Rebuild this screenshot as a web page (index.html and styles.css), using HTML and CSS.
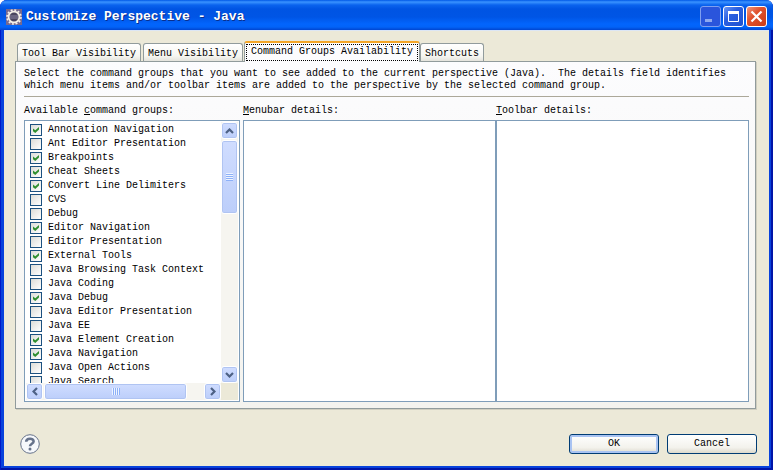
FILE: index.html
```html
<!DOCTYPE html>
<html lang="en">
    <head>
        <meta charset="utf-8">
        <meta name="viewport" content="width=device-width">
        <title>Customize Perspective - Java</title>
        <link rel="stylesheet" href="styles.css">
    </head>
    <body>
        <div class="window">
            <header class="titlebar">
                <svg class="logo" width="16" height="16" viewBox="0 0 16 16">
                    <rect width="16" height="16" fill="#75698f"/>
                    <circle cx="8" cy="8" r="7" fill="none" stroke="#f4efe8" stroke-width="1.6" stroke-dasharray="2 1.670"/>
                    <circle cx="8" cy="8" r="5.4" fill="#4a4560" stroke="#f4efe8" stroke-width="1.8"/>
                    <path d="M4 7h8M4 9h8" stroke="#8b86a3"/>
                </svg>
                <h1>Customize Perspective - Java</h1>
                <button class="caption minimize" aria-label="Minimize">
                    <svg width="19" height="19" viewBox="0 0 19 19"><path d="M4 13.5h7" stroke="#8fa9f0" stroke-width="3"/></svg>
                </button>
                <button class="caption" aria-label="Maximize">
                    <svg width="19" height="19" viewBox="0 0 19 19"><path d="M4.5 5v9.5h10V5" fill="none" stroke="#fff"/><path d="M4 5.5h11" stroke="#fff" stroke-width="3"/></svg>
                </button>
                <button class="caption close" aria-label="Close">
                    <svg width="19" height="19" viewBox="0 0 19 19"><path d="M4.5 4.5l10 10M14.5 4.5l-10 10" stroke="#fff" stroke-width="2.2"/></svg>
                </button>
            </header>

            <main class="client">
                <div class="tabs" role="tablist">
                    <button class="tab" role="tab">Tool Bar Visibility</button>
                    <button class="tab" role="tab">Menu Visibility</button>
                    <button class="tab active" role="tab" aria-selected="true"><span>Command Groups Availability</span></button>
                    <button class="tab" role="tab">Shortcuts</button>
                </div>
                <section class="panel">
                    <p class="description">Select the command groups that you want to see added to the current perspective (Java).&nbsp; The details field identifies which menu items and/or toolbar items are added to the perspective by the selected command group.</p>
                    <div class="columns">
                        <div class="column groups">
                            <h2 id="groups-label">Available <u>c</u>ommand groups:</h2>
                            <div class="box list-box">
                                <ul class="list" aria-labelledby="groups-label">
                                    <li><label><input type="checkbox" checked>Annotation Navigation</label></li>
                                    <li><label><input type="checkbox">Ant Editor Presentation</label></li>
                                    <li><label><input type="checkbox" checked>Breakpoints</label></li>
                                    <li><label><input type="checkbox" checked>Cheat Sheets</label></li>
                                    <li><label><input type="checkbox" checked>Convert Line Delimiters</label></li>
                                    <li><label><input type="checkbox">CVS</label></li>
                                    <li><label><input type="checkbox">Debug</label></li>
                                    <li><label><input type="checkbox" checked>Editor Navigation</label></li>
                                    <li><label><input type="checkbox">Editor Presentation</label></li>
                                    <li><label><input type="checkbox" checked>External Tools</label></li>
                                    <li><label><input type="checkbox">Java Browsing Task Context</label></li>
                                    <li><label><input type="checkbox">Java Coding</label></li>
                                    <li><label><input type="checkbox" checked>Java Debug</label></li>
                                    <li><label><input type="checkbox">Java Editor Presentation</label></li>
                                    <li><label><input type="checkbox">Java EE</label></li>
                                    <li><label><input type="checkbox" checked>Java Element Creation</label></li>
                                    <li><label><input type="checkbox" checked>Java Navigation</label></li>
                                    <li><label><input type="checkbox">Java Open Actions</label></li>
                                    <li><label><input type="checkbox">Java Search</label></li>
                                </ul>
                                <div class="scroll vertical">
                                    <button class="arrow" aria-label="Scroll up"><svg width="9" height="6" viewBox="0 0 9 6"><path d="M1 5l3.500-3.500L8 5"/></svg></button>
                                    <div class="thumb"><span class="grip"></span></div>
                                    <div class="track"></div>
                                    <button class="arrow" aria-label="Scroll down"><svg width="9" height="6" viewBox="0 0 9 6"><path d="M1 1l3.500 3.500L8 1"/></svg></button>
                                </div>
                                <div class="scroll horizontal">
                                    <button class="arrow" aria-label="Scroll left"><svg width="6" height="9" viewBox="0 0 6 9"><path d="M5 1L1.500 4.500 5 8"/></svg></button>
                                    <div class="thumb"><span class="grip"></span></div>
                                    <div class="track"></div>
                                    <button class="arrow" aria-label="Scroll right"><svg width="6" height="9" viewBox="0 0 6 9"><path d="M1 1l3.500 3.500L1 8"/></svg></button>
                                </div>
                                <div class="corner"></div>
                            </div>
                        </div>
                        <div class="column">
                            <h2 id="menubar-label"><u>M</u>enubar details:</h2>
                            <div class="box" role="tree" aria-labelledby="menubar-label"></div>
                        </div>
                        <div class="column">
                            <h2 id="toolbar-label"><u>T</u>oolbar details:</h2>
                            <div class="box" role="tree" aria-labelledby="toolbar-label"></div>
                        </div>
                    </div>
                </section>
                <footer class="actions">
                    <button class="help" aria-label="Help">
                        <svg width="20" height="20" viewBox="0 0 20 20">
                            <circle cx="10" cy="10" r="9.300" fill="#f6f8fb" stroke="#66728a"/>
                            <path d="M6.200 7.800C6.200 3.800 13.800 3.700 13.600 7.500 13.500 9.800 10 9.700 10 12.300" fill="none" stroke="#66728a" stroke-width="2.600"/>
                            <circle cx="10" cy="15" r="1.500" fill="#66728a"/>
                        </svg>
                    </button>
                    <button class="push default">OK</button>
                    <button class="push">Cancel</button>
                </footer>
            </main>
        </div>
    </body>
</html>
```
FILE: styles.css
```css
* {
    box-sizing: border-box;
}
html, body {
    height: 100%;
}
body {
    margin: 0;
    background: #fff;
    color: #000;
    font: 10px/12px "Liberation Mono", monospace;
}
button {
    padding: 0;
    font: inherit;
    color: inherit;
}
svg {
    display: block;
}
h1, h2, p, ul {
    margin: 0;
    padding: 0;
}

/* window frame */
.window {
    display: flex;
    flex-direction: column;
    height: 100%;
    min-height: 300px;
    padding: 0 4px 4px;
    border-radius: 7px 7px 0 0;
    background: #0842dc;
    box-shadow: inset 1px 0 #0019c8, inset -2px -2px #0014a8;
    overflow: hidden;
}
.titlebar {
    display: flex;
    align-items: center;
    flex: none;
    gap: 2px;
    height: 30px;
    margin: 0 -4px;
    padding: 3px 6px 0;
    background: linear-gradient(#0058e6 0, #3a93ff 2px, #0a63ee 5px, #0054e3 9px, #0055e5 17px, #0265fd 24px, #0263f8 27px, #0045d0 30px);
}
.titlebar h1 {
    flex: 1;
    padding-left: 2px;
    color: #fff;
    font-size: 13px;
    line-height: 16px;
    text-shadow: 1px 1px #0a2f8c;
}
.caption {
    width: 21px;
    height: 21px;
    border: 1px solid #fff;
    border-radius: 3px;
    background: linear-gradient(135deg, #6a96f5, #2a5fe0 40%, #1f50cf);
}
.minimize {
    border-color: #7f9ff0;
    background: #2a55dc;
}
.close {
    background: linear-gradient(135deg, #f0967c, #e0522e 40%, #cc3c14);
}

.client {
    display: flex;
    flex-direction: column;
    flex: 1;
    min-height: 0;
    padding: 10px 12px 12px 11px;
    background: #ece9d8;
    border: 0 solid #dce6f5;
    border-top-width: 1px;
}

/* tabs */
.tabs {
    display: flex;
    align-items: flex-end;
    gap: 2px;
    padding-left: 2px;
}
.tab {
    height: 18px;
    padding: 2px 4px 0;
    border: 1px solid #919b9c;
    border-bottom: 0;
    border-radius: 3px 3px 0 0;
    background: linear-gradient(#fff, #f6f6f1 70%, #e4e3dc);
}
.tab.active {
    height: 21px;
    margin: 0 -2px -1px -1px;
    padding: 0 1px;
    border-top: 2px solid #f4a628;
    background: #fcfcfe;
    z-index: 1;
}
.active span {
    display: block;
    padding: 1px 4px 2px;
    border: 1px dotted #000;
}

.panel {
    display: flex;
    flex-direction: column;
    flex: 1;
    min-height: 0;
    margin-right: 1px;
    padding: 6px 6px 6px 8px;
    border: 1px solid #919b9c;
    background: linear-gradient(#fcfcfe, #f4f3ee);
    box-shadow: 1px 1px #d0cebf;
}
.description {
    padding-bottom: 4px;
    border-bottom: 1px solid #aca899;
}

/* the three lists */
.columns {
    display: grid;
    grid-template-columns: 219px 1fr 1fr;
    flex: 1;
    min-height: 0;
}
.column {
    display: flex;
    flex-direction: column;
    min-height: 0;
}
.groups {
    padding-right: 3px;
}
.column h2 {
    padding: 8px 0 3px;
    font-size: 10px;
    font-weight: normal;
}
.box {
    flex: 1;
    min-height: 0;
    border: 1px solid #7f9db9;
    background: #fff;
}
.list-box {
    display: grid;
    grid-template-columns: 1fr 17px;
    grid-template-rows: 1fr 17px;
    padding: 1px;
}
.list {
    min-height: 0;
    padding: 1px 0 0 4px;
    list-style: none;
    overflow: hidden;
}
.list li {
    height: 14px;
}
.list label {
    display: flex;
    align-items: center;
    gap: 6px;
    height: 14px;
    white-space: nowrap;
}
.list input {
    appearance: none;
    flex: none;
    width: 12px;
    height: 12px;
    margin: 0;
    border: 1px solid #1c5180;
    background: linear-gradient(135deg, #dcdcd7, #fff);
}
.list input:checked::before {
    content: "";
    display: block;
    width: 6px;
    height: 6px;
    margin: 2px;
    background: #2f8f2f;
    clip-path: polygon(0 25%, 38% 55%, 100% 0, 100% 42%, 38% 100%, 0 70%);
}

/* scroll bars */
.scroll {
    display: flex;
    gap: 1px;
    min-width: 0;
    min-height: 0;
    background: #f6f5f0;
}
.vertical {
    flex-direction: column;
}
.arrow, .thumb {
    display: flex;
    align-items: center;
    justify-content: center;
    flex: none;
    border: 1px solid #fff;
    border-radius: 3px;
    background: linear-gradient(#d0ddff, #bccefa);
    box-shadow: inset 0 0 0 1px #b0c4f2;
}
.arrow {
    width: 17px;
    height: 17px;
}
.arrow path {
    fill: none;
    stroke: #4d6185;
    stroke-width: 2.2;
}
.vertical .thumb {
    height: 74px;
}
.horizontal .thumb {
    width: 143px;
}
.track {
    flex: 1;
}
.grip {
    width: 7px;
    height: 8px;
    background: repeating-linear-gradient(#eef4ff 0 1px, #8cb0f8 1px 2px);
}
.horizontal .grip {
    width: 8px;
    height: 7px;
    background: repeating-linear-gradient(90deg, #eef4ff 0 1px, #8cb0f8 1px 2px);
}
.corner {
    background: #ece9d8;
}

/* bottom row */
.actions {
    display: flex;
    align-items: center;
    gap: 8px;
    padding: 25px 0 0 5px;
}
.help {
    margin-right: auto;
    border: 0;
    background: none;
}
.push {
    width: 90px;
    height: 20px;
    border: 1px solid #003c74;
    border-radius: 3px;
    background: linear-gradient(#fff, #f3f2ec 70%, #dcd9cc);
}
.push.default {
    box-shadow: inset 0 0 0 2px #a9c3f2;
}
```
